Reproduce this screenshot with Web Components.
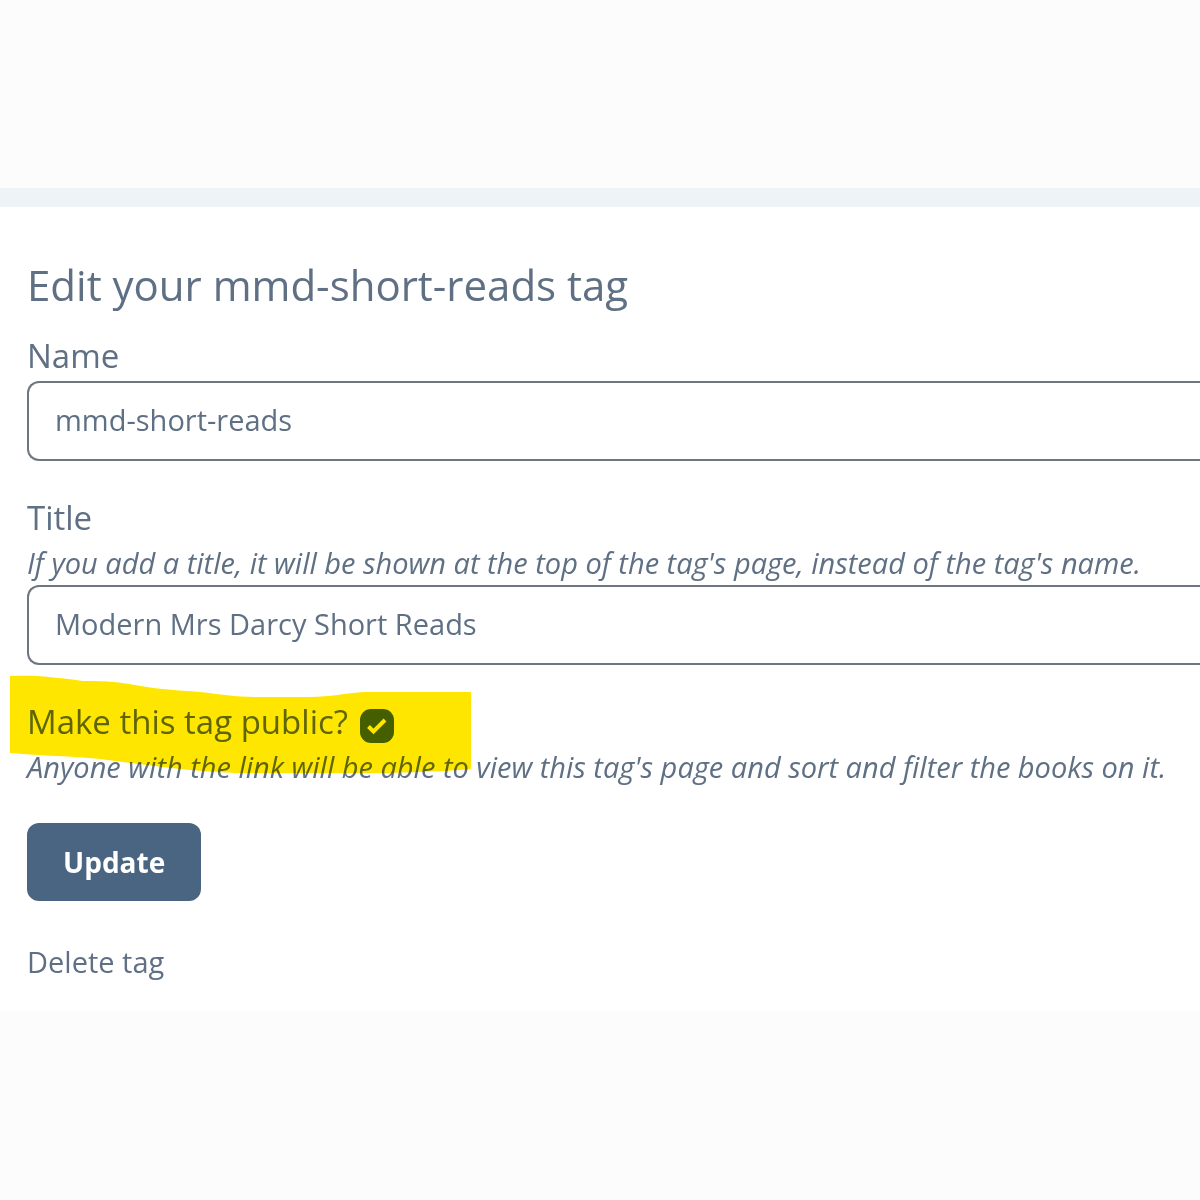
<!DOCTYPE html>
<html lang="en">
<head>
<meta charset="utf-8">
<meta name="viewport" content="width=device-width, initial-scale=1">
<title>Edit tag</title>
<style>
  body {
    margin: 0;
    background: #fcfcfc;
    color: #5f7084;
    font-family: "Open Sans", "Noto Sans", sans-serif;
  }
</style>
</head>
<body>
<tag-panel>
  <span slot="title">Edit your mmd-short-reads tag</span>
  <tag-field label="Name" value="mmd-short-reads"></tag-field>
  <tag-field label="Title" value="Modern Mrs Darcy Short Reads"
    hint="If you add a title, it will be shown at the top of the tag's page, instead of the tag's name."></tag-field>
  <tag-check label="Make this tag public?"
    hint="Anyone with the link will be able to view this tag's page and sort and filter the books on it."></tag-check>
  <tag-button>Update</tag-button>
  <tag-link href="#delete">Delete tag</tag-link>
</tag-panel>

<script>
// shared text styles for the form rows
const TEXT = `
  label { font-size: 33px; line-height: 46px; }
  .hint { margin: 0; font-size: 29px; line-height: 44px; font-style: italic; }
`;

class TagPanel extends HTMLElement {
  constructor() {
    super();
    this.attachShadow({ mode: "open" }).innerHTML = `
      <style>
        :host { display: block; padding-top: 188px; }
        main {
          padding: 50px 0 26px 27px;
          border-top: 19px solid #eef3f8;
          background: #fff;
        }
        h1 { margin: 0 0 20px; font-size: 42px; line-height: 56px; font-weight: 400; }
        form { display: flex; flex-direction: column; gap: 34px; }
      </style>
      <main>
        <h1><slot name="title"></slot></h1>
        <form><slot></slot></form>
      </main>
    `;
  }
}

class TagField extends HTMLElement {
  connectedCallback() {
    const hint = this.getAttribute("hint");
    this.attachShadow({ mode: "open" }).innerHTML = `
      <style>
        ${TEXT}
        :host { display: block; }
        label { display: block; }
        label + input { margin-top: 2px; }
        input {
          display: block;
          box-sizing: border-box;
          width: 100%;
          height: 80px;
          padding: 0 0 4px 26px;
          border: 2px solid #6f7682;
          border-right: 0;
          border-radius: 12px 0 0 12px;
          background: #fff;
          color: inherit;
          font: 29px "Open Sans", sans-serif;
          outline: none;
        }
      </style>
      <label for="box">${this.getAttribute("label")}</label>
      ${hint ? `<p class="hint" id="hint">${hint}</p>` : ""}
      <input id="box" type="text" value="${this.getAttribute("value")}">
    `;
  }
}

class TagCheck extends HTMLElement {
  connectedCallback() {
    this.attachShadow({ mode: "open" }).innerHTML = `
      <style>
        ${TEXT}
        :host { display: block; position: relative; }
        .row { display: flex; align-items: center; gap: 12px; }
        .box { display: grid; margin-top: 8px; }
        .box > * { grid-area: 1 / 1; }
        input {
          appearance: none;
          width: 34px;
          height: 34px;
          margin: 0;
          border-radius: 11px;
          background: #456880;
        }
        .box svg { visibility: hidden; pointer-events: none; }
        input:checked + svg { visibility: visible; }
      </style>
      <div class="row">
        <label for="public">${this.getAttribute("label")}</label>
        <span class="box">
          <input id="public" type="checkbox" checked>
          <svg width="34" height="34" viewBox="0 0 34 34" aria-hidden="true">
            <path d="M8.5 17.5l5 5L25 11" fill="none" stroke="#fff" stroke-width="4"/>
          </svg>
        </span>
      </div>
      <p class="hint">${this.getAttribute("hint")}</p>
      <marker-stroke></marker-stroke>
    `;
  }
}

// yellow highlighter drawn over the row
class MarkerStroke extends HTMLElement {
  constructor() {
    super();
    this.attachShadow({ mode: "open" }).innerHTML = `
      <style>
        :host {
          position: absolute;
          top: -24px;
          left: -17px;
          mix-blend-mode: multiply;
          pointer-events: none;
        }
        svg { display: block; }
      </style>
      <svg width="462" height="102" viewBox="0 0 462 102" aria-hidden="true">
        <path fill="#ffe600" d="M0 1C25 0 45 2 73 6C88 6 105 6 125 10C145 14 165 15 190 17C210 19 225 22 245 22H300C320 22 335 18 355 17H461V94C445 96 410 97 380 98H225C205 97 190 96 170 94C140 91 115 87 90 84C60 81 35 81 0 78Z"/>
      </svg>
    `;
  }
}

class TagButton extends HTMLElement {
  constructor() {
    super();
    this.attachShadow({ mode: "open" }).innerHTML = `
      <style>
        :host { display: block; margin-bottom: 4px; }
        button {
          display: block;
          padding: 16px 36px;
          border: 0;
          border-radius: 12px;
          background: #4a6581;
          color: #fff;
          font: 700 28px/46px "Open Sans", sans-serif;
          cursor: pointer;
        }
      </style>
      <button type="button"><slot></slot></button>
    `;
  }
}

class TagLink extends HTMLElement {
  connectedCallback() {
    this.attachShadow({ mode: "open" }).innerHTML = `
      <style>
        :host { display: block; font-size: 29px; line-height: 46px; }
        a { color: inherit; text-decoration: none; }
      </style>
      <a href="${this.getAttribute("href")}"><slot></slot></a>
    `;
  }
}

customElements.define("marker-stroke", MarkerStroke);
customElements.define("tag-panel", TagPanel);
customElements.define("tag-field", TagField);
customElements.define("tag-check", TagCheck);
customElements.define("tag-button", TagButton);
customElements.define("tag-link", TagLink);
</script>
</body>
</html>
